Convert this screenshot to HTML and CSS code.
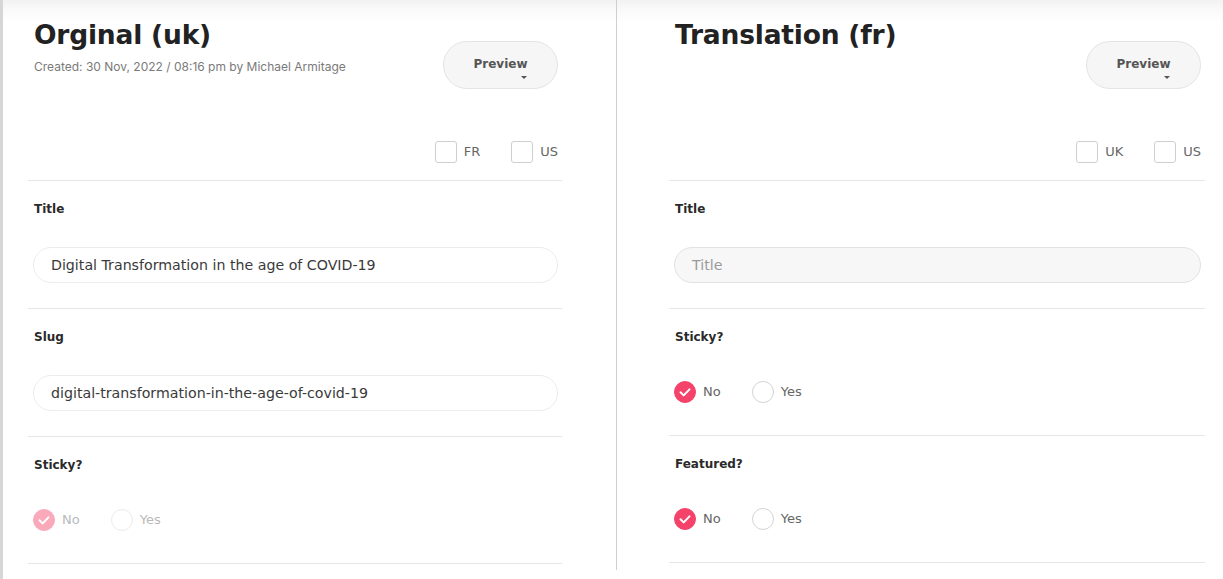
FILE: index.html
```html
<!DOCTYPE html>
<html>
<head>
<meta charset="utf-8">
<link rel="stylesheet" href="styles.css">
</head>
<body>
<div class="page">
  <div class="col col-left">
    <div class="header">
      <div class="head-text">
        <h1>Orginal (uk)</h1>
        <div class="meta">Created: 30 Nov, 2022 / 08:16 pm by Michael Armitage</div>
      </div>
      <button class="preview"><span class="preview-label">Preview</span><span class="caret"></span></button>
    </div>
    <div class="checks">
      <label class="check"><span class="box"></span>FR</label>
      <label class="check"><span class="box"></span>US</label>
    </div>
    <div class="section">
      <div class="label">Title</div>
      <div class="input">Digital Transformation in the age of COVID-19</div>
    </div>
    <div class="section">
      <div class="label">Slug</div>
      <div class="input">digital-transformation-in-the-age-of-covid-19</div>
    </div>
    <div class="section radio-section disabled">
      <div class="label">Sticky?</div>
      <div class="radios">
        <span class="radio checked"><span class="dot"><svg viewBox="0 0 22 22"><path d="M6.5 11.2l3.2 3.2 5.8-6" fill="none" stroke="#fff" stroke-width="2" stroke-linecap="round" stroke-linejoin="round"/></svg></span>No</span>
        <span class="radio"><span class="dot"></span>Yes</span>
      </div>
    </div>
    <div class="section end"></div>
  </div>
  <div class="vline"></div>
  <div class="col col-right">
    <div class="header">
      <div class="head-text">
        <h1>Translation (fr)</h1>
      </div>
      <button class="preview"><span class="preview-label">Preview</span><span class="caret"></span></button>
    </div>
    <div class="checks">
      <label class="check"><span class="box"></span>UK</label>
      <label class="check"><span class="box"></span>US</label>
    </div>
    <div class="section">
      <div class="label">Title</div>
      <div class="input empty">Title</div>
    </div>
    <div class="section radio-section">
      <div class="label">Sticky?</div>
      <div class="radios">
        <span class="radio checked"><span class="dot"><svg viewBox="0 0 22 22"><path d="M6.5 11.2l3.2 3.2 5.8-6" fill="none" stroke="#fff" stroke-width="2" stroke-linecap="round" stroke-linejoin="round"/></svg></span>No</span>
        <span class="radio"><span class="dot"></span>Yes</span>
      </div>
    </div>
    <div class="section radio-section">
      <div class="label">Featured?</div>
      <div class="radios">
        <span class="radio checked"><span class="dot"><svg viewBox="0 0 22 22"><path d="M6.5 11.2l3.2 3.2 5.8-6" fill="none" stroke="#fff" stroke-width="2" stroke-linecap="round" stroke-linejoin="round"/></svg></span>No</span>
        <span class="radio"><span class="dot"></span>Yes</span>
      </div>
    </div>
    <div class="section end"></div>
  </div>
</div>
</body>
</html>
```
FILE: styles.css
```css
* { box-sizing: border-box; }
html, body { margin: 0; padding: 0; background: #fff; }
body {
  font-family: "Open Sans", "Liberation Sans", sans-serif;
  color: #222;
  width: 1223px;
  height: 579px;
  overflow: hidden;
}
.page {
  display: flex;
  align-items: flex-start;
  height: 579px;
  border-left: 3px solid #d6d6d6;
  background: linear-gradient(#f2f2f2 0, #fafafa 10px, #fff 22px);
}
.col-left {
  width: 613px;
  padding: 0 54px 0 25px;
}
.vline {
  width: 1px;
  height: 570px;
  background: #cfcfcf;
  flex: none;
}
.col-right {
  width: 588px;
  padding: 0 0 0 52px;
}
.header {
  display: flex;
  justify-content: space-between;
  align-items: flex-start;
  padding: 0 4px 0 6px;
}
h1 {
  margin: 17px 0 0;
  font-family: "DejaVu Sans", sans-serif;
  font-weight: 700;
  font-size: 26.5px;
  line-height: 36px;
  letter-spacing: -0.2px;
  color: #222;
}
.meta {
  margin-top: 6px;
  font-family: "Inter", "Liberation Sans", sans-serif;
  font-size: 12px;
  color: #7a7a7a;
  line-height: 16px;
}
.preview {
  margin-top: 41px;
  width: 115px;
  height: 48px;
  border-radius: 24px;
  background: #f6f6f6;
  border: 1px solid #e4e4e4;
  position: relative;
  display: flex;
  align-items: flex-start;
  justify-content: center;
  padding: 15px 0 0;
  font-family: "DejaVu Sans", sans-serif;
  font-weight: 700;
  font-size: 12px;
  color: #555;
}
.caret {
  position: absolute;
  left: 77px;
  top: 34px;
  width: 0;
  height: 0;
  border-left: 3px solid transparent;
  border-right: 3px solid transparent;
  border-top: 3px solid #555;
}
.checks {
  display: flex;
  justify-content: flex-end;
  gap: 31px;
  margin-top: 52px;
  padding: 0 4px 17px 0;
}
.check {
  display: flex;
  align-items: center;
  gap: 7px;
  font-family: "DejaVu Sans", sans-serif;
  font-size: 13px;
  color: #666;
  line-height: 22px;
}
.box {
  width: 22px;
  height: 22px;
  border: 1px solid #cfcfcf;
  border-radius: 3px;
  background: #fff;
}
.section {
  border-top: 1px solid #e6e6e6;
  padding: 20px 4px 25px 5px;
}
.section.end { padding: 0; }
.label {
  font-family: "DejaVu Sans", sans-serif;
  font-weight: 700;
  font-size: 12px;
  line-height: 16px;
  color: #2a2a2a;
  padding-left: 1px;
}
.input {
  margin-top: 30px;
  height: 36px;
  border: 1px solid #ececec;
  border-radius: 18px;
  padding: 0 17px;
  display: flex;
  align-items: center;
  font-family: "DejaVu Sans", sans-serif;
  font-size: 14.2px;
  color: #3a3a3a;
  background: #fff;
}
.input.empty {
  background: #f7f7f7;
  border-color: #e2e2e2;
  color: #9a9a9a;
}
.radio-section { padding-bottom: 32px; }
.radios {
  display: flex;
  gap: 31px;
  margin-top: 36px;
}
.radio {
  display: flex;
  align-items: center;
  gap: 7px;
  font-family: "DejaVu Sans", sans-serif;
  font-size: 13px;
  color: #666;
  line-height: 22px;
}
.dot {
  width: 22px;
  height: 22px;
  border-radius: 50%;
  border: 1px solid #d4d4d4;
  background: #fff;
  display: flex;
}
.dot svg { width: 22px; height: 22px; margin: -1px; }
.radio.checked .dot {
  background: #f5426a;
  border-color: #f5426a;
}
.disabled .radios { opacity: 0.45; }
```
